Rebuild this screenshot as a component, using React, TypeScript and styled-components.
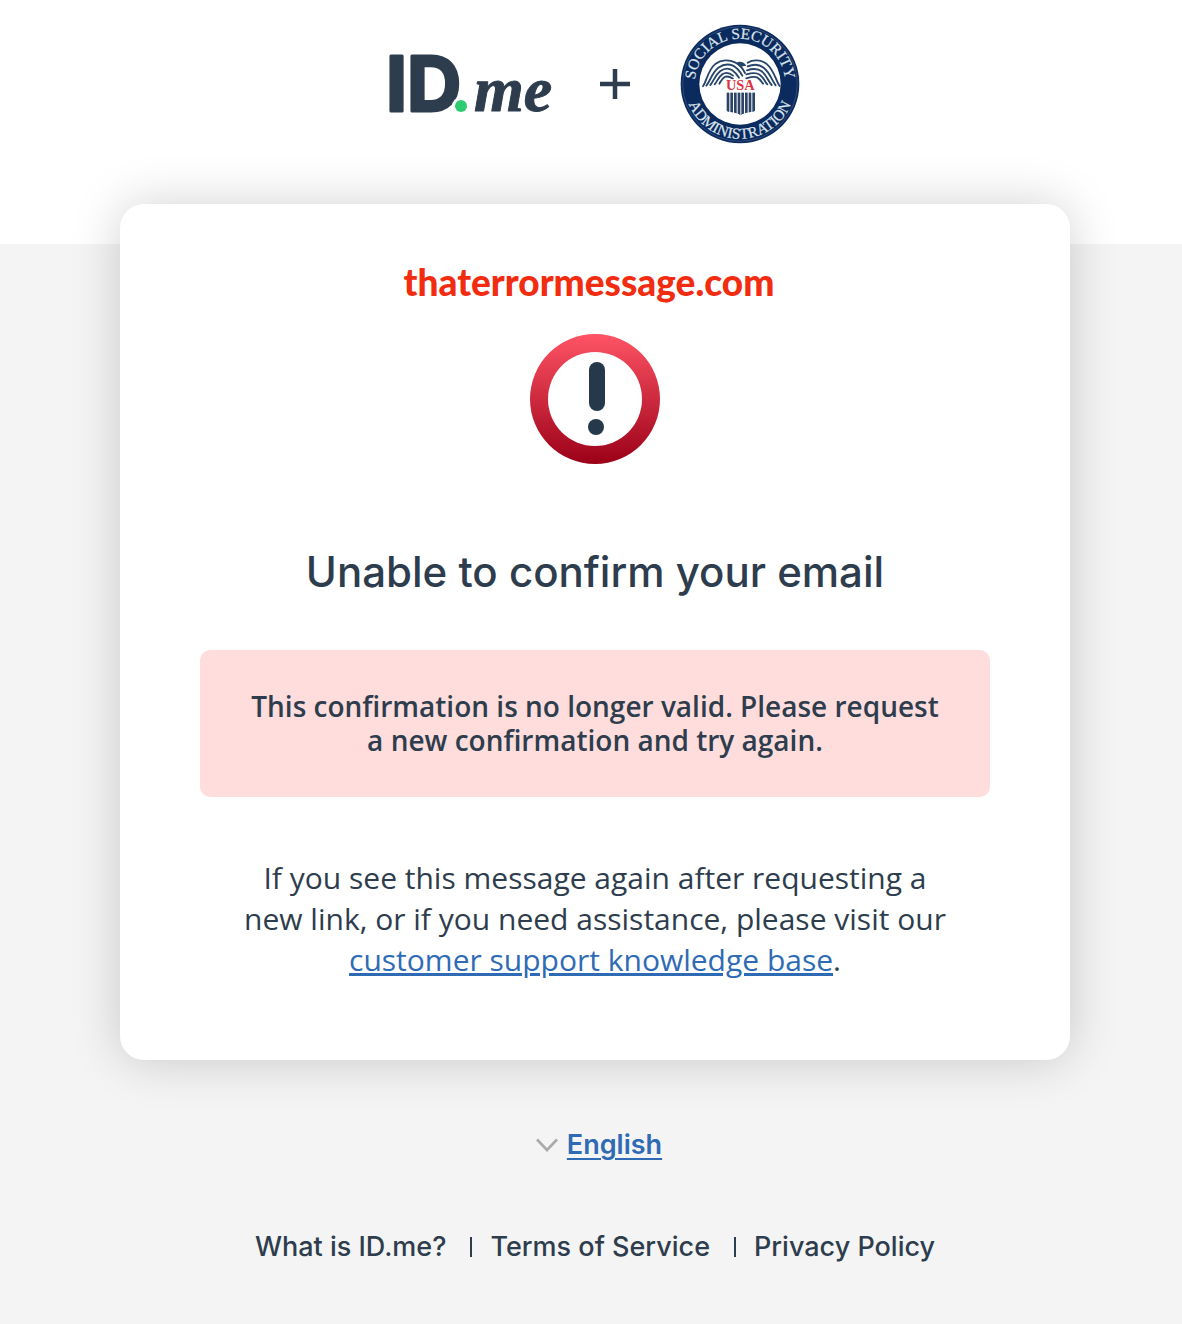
import React from 'react';
import styled, { createGlobalStyle } from 'styled-components';

const ink = '#2e3d4d';
const link = '#2f6bb5';
const display = "Inter, 'Liberation Sans', sans-serif";
const text = "'Open Sans', 'Noto Sans', sans-serif";

const GlobalStyle = createGlobalStyle`
  *, *::before, *::after { box-sizing: border-box; }
  body {
    margin: 0;
    background: #f4f4f4;
    color: ${ink};
    font-family: ${text};
  }
`;

const Page = styled.div`
  display: flex;
  flex-direction: column;
`;

const Header = styled.header`
  display: flex;
  align-items: center;
  justify-content: center;
  gap: 50px;
  padding: 24px 0 100px 8px;
  background: #fff;
`;

const LogoSvg = styled.svg`
  overflow: visible;
`;

const Main = styled.main`
  display: flex;
  justify-content: center;
  margin-top: -40px;
  padding: 0 112px 0 120px;
`;

const Card = styled.section`
  display: flex;
  flex-direction: column;
  align-items: center;
  width: 100%;
  max-width: 960px;
  padding: 58px 80px 80px;
  border-radius: 24px;
  background: #fff;
  box-shadow: 0 0 50px rgba(0, 0, 0, 0.18);
  text-align: center;
`;

const Watermark = styled.p`
  margin: 0 12px 32px 0;
  color: #f22c10;
  font: 900 37px/40px Lato, sans-serif;
`;

const Title = styled.h1`
  margin: 82px 0 52px;
  font: 500 42px/52px ${display};
`;

const Alert = styled.div`
  width: 100%;
  padding: 39px 48px 40px;
  border-radius: 10px;
  background: #ffdddc;
  font-size: 28px;
  font-weight: 600;
  line-height: 34px;
`;

const Help = styled.p`
  max-width: 720px;
  margin: 60px 0 0;
  font-size: 30px;
  line-height: 41px;
`;

const HelpLink = styled.a`
  color: ${link};
  text-decoration: underline;
`;

const Footer = styled.footer`
  display: flex;
  flex-direction: column;
  align-items: center;
  gap: 62px;
  padding: 65px 0 57px 8px;
`;

const LanguageButton = styled.button`
  display: flex;
  align-items: center;
  gap: 9px;
  margin-left: 8px;
  padding: 0;
  border: 0;
  background: none;
  color: ${link};
  cursor: pointer;
  font: 600 27px/40px ${display};

  span {
    text-decoration: underline;
    text-decoration-thickness: 2px;
    text-underline-offset: 4px;
  }
`;

const FooterNav = styled.nav`
  display: flex;
  align-items: center;
`;

const FooterLink = styled.a`
  color: ${ink};
  font: 500 27px/40px ${display};
  text-decoration: none;
`;

const Divider = styled.span`
  width: 2px;
  height: 20px;
  margin: 0 18px 0 24px;
  background: ${ink};
`;

const IdMeLogo = () => (
  <LogoSvg width="160" height="64" viewBox="0 0 160 64" role="img" aria-label="ID.me">
    <g fill={ink} stroke={ink} strokeLinejoin="round">
      <text x="-4" y="59" strokeWidth="3" fontFamily="Inter, sans-serif" fontWeight="700" fontSize="75">ID</text>
      <circle cx="71" cy="54" r="9" fill="#fff" stroke="none" />
      <text x="84" y="59" strokeWidth="1" fontFamily="'Liberation Serif', serif" fontStyle="italic" fontWeight="700" fontSize="64">me</text>
    </g>
    <circle cx="71" cy="54" r="6" fill="#2ecc71" />
  </LogoSvg>
);

const Plus = () => (
  <svg width="30" height="30" viewBox="0 0 30 30" aria-hidden="true">
    <path d="M15 0v30M0 15h30" stroke={ink} strokeWidth="4.5" />
  </svg>
);

const feathers = [
  'M96 216C108 198 110 168 134 148C150 136 174 135 192 144C206 150 216 164 222 176',
  'M106 214C118 200 122 176 142 160C156 150 172 148 186 154C198 160 206 170 214 184',
  'M118 212C128 202 130 184 148 170C160 162 172 160 184 168C192 174 198 180 204 190',
  'M131 210C139 202 140 190 154 180C164 173 174 174 186 184',
  'M145 208C150 200 152 194 161 188C169 184 178 188 186 193',
  'M326 215C314 198 310 168 286 148C270 136 246 135 230 145',
  'M314 213C302 198 298 176 278 160C264 149 248 149 230 156',
  'M302 212C292 202 288 184 272 171C260 162 246 162 228 168',
  'M289 210C281 202 279 190 266 181C256 174 244 175 226 180',
  'M276 208C270 200 267 194 258 189C250 186 240 188 226 192',
];

const stripes = [167, 178, 189, 200, 211, 222, 233, 244];

const Seal = () => (
  <svg width="120" height="120" viewBox="27 29 360 360" role="img" aria-label="Social Security Administration, USA">
    <defs>
      <path id="seal-top" d="M84 267A136 136 0 1 1 330 267" />
      <path id="seal-bottom" d="M45 177A165 165 0 1 0 369 177" />
      <clipPath id="shield">
        <path d="M165 234H254V284C254 292 246 292 236 294C224 296 214 298 209 304C204 298 194 296 182 294C172 292 165 292 165 284Z" />
      </clipPath>
    </defs>
    <circle cx="207" cy="209" r="178" fill="#0b2b5e" />
    <circle cx="207" cy="209" r="172" fill="none" stroke="#40598a" strokeWidth="2" />
    <circle cx="207" cy="209" r="122" fill="#fff" />
    <g fill="#dce4ee" fontFamily="'Liberation Serif', serif" fontSize="46" textAnchor="middle" stroke="#dce4ee" strokeWidth="0.6">
      <text><textPath href="#seal-top" startOffset="50%">SOCIAL SECURITY</textPath></text>
      <text><textPath href="#seal-bottom" startOffset="50%">ADMINISTRATION</textPath></text>
    </g>
    <g fill="none" stroke="#26456b" strokeWidth="5.5" strokeLinecap="round">
      {feathers.map((d) => <path key={d} d={d} />)}
    </g>
    <path d="M196 146C206 138 220 144 226 154L216 156C208 160 200 154 196 146Z" fill="#26456b" />
    <text x="208" y="227" textAnchor="middle" fill="#dd3340" stroke="#fff" strokeWidth="5" paintOrder="stroke" fontFamily="'Liberation Serif', serif" fontWeight="700" fontSize="43">USA</text>
    <g clipPath="url(#shield)" fill="#2c4468">
      {stripes.map((x) => <rect key={x} x={x} y="234" width="8" height="72" />)}
    </g>
  </svg>
);

const ErrorIcon = () => (
  <svg width="130" height="130" viewBox="0 0 130 130" role="img" aria-label="Error">
    <defs>
      <linearGradient id="ring" x1="0" y1="0" x2="0" y2="1">
        <stop offset="0" stopColor="#ff5465" />
        <stop offset="1" stopColor="#9b0018" />
      </linearGradient>
    </defs>
    <circle cx="65" cy="65" r="65" fill="url(#ring)" />
    <circle cx="65" cy="65" r="47" fill="#fff" />
    <rect x="59" y="28" width="16" height="49" rx="8" fill="#26394a" />
    <circle cx="66" cy="93" r="8" fill="#26394a" />
  </svg>
);

const Chevron = () => (
  <svg width="22" height="14" viewBox="0 0 22 14" aria-hidden="true">
    <path d="M1 1.5L11 12L21 1.5" fill="none" stroke="#aaa" strokeWidth="2.6" />
  </svg>
);

export default function App() {
  return (
    <Page>
      <GlobalStyle />
      <Header>
        <IdMeLogo />
        <Plus />
        <Seal />
      </Header>
      <Main>
        <Card>
          <Watermark>thaterrormessage.com</Watermark>
          <ErrorIcon />
          <Title>Unable to confirm your email</Title>
          <Alert role="alert">
            This confirmation is no longer valid. Please request a new confirmation and try again.
          </Alert>
          <Help>
            If you see this message again after requesting a new link, or if you need assistance, please visit our{' '}
            <HelpLink href="#support">customer support knowledge base</HelpLink>.
          </Help>
        </Card>
      </Main>
      <Footer>
        <LanguageButton type="button">
          <Chevron />
          <span>English</span>
        </LanguageButton>
        <FooterNav aria-label="Footer">
          <FooterLink href="#about">What is ID.me?</FooterLink>
          <Divider />
          <FooterLink href="#terms">Terms of Service</FooterLink>
          <Divider />
          <FooterLink href="#privacy">Privacy Policy</FooterLink>
        </FooterNav>
      </Footer>
    </Page>
  );
}
